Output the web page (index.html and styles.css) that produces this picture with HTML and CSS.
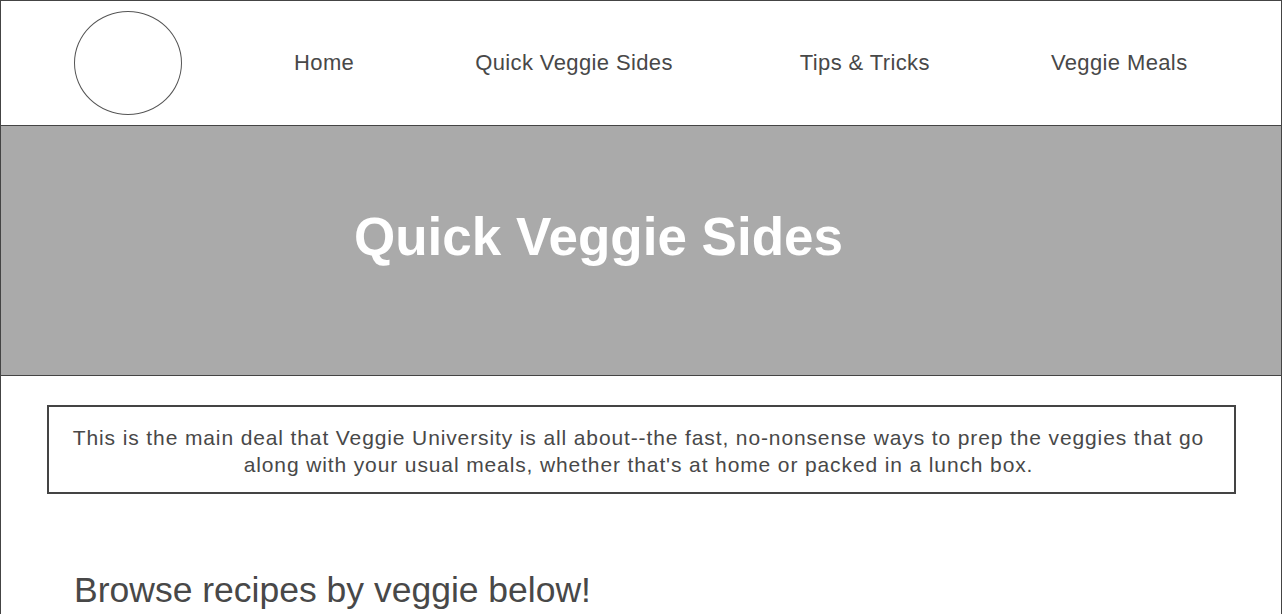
FILE: index.html
```html
<!DOCTYPE html>
<html lang="en">
<head>
<meta charset="utf-8">
<title>Quick Veggie Sides</title>
<link rel="stylesheet" href="styles.css">
</head>
<body>
<div class="page">
  <header class="site-header">
    <div class="logo"></div>
    <nav class="nav">
      <a class="nav-link nav-home" href="#">Home</a>
      <a class="nav-link nav-sides" href="#">Quick Veggie Sides</a>
      <a class="nav-link nav-tips" href="#">Tips &amp; Tricks</a>
      <a class="nav-link nav-meals" href="#">Veggie Meals</a>
    </nav>
  </header>
  <section class="hero">
    <h1 class="hero-title">Quick Veggie Sides</h1>
  </section>
  <main class="content">
    <p class="intro">This is the main deal that Veggie University is all about--the fast, no-nonsense ways to prep the veggies that go along with your usual meals, whether that's at home or packed in a lunch box.</p>
    <h2 class="browse">Browse recipes by veggie below!</h2>
  </main>
</div>
</body>
</html>
```
FILE: styles.css
```css
* { box-sizing: border-box; }
html, body { margin: 0; padding: 0; background: #fff; }
body {
  font-family: "Liberation Sans", Arial, sans-serif;
  color: #484848;
  overflow: hidden;
}
.page {
  width: 1282px;
  min-height: 700px;
  border: 1px solid #444;
}
.site-header {
  height: 125px;
  display: flex;
  align-items: center;
  padding-left: 73px;
  border-bottom: 1px solid #444;
}
.logo {
  width: 108px;
  height: 104px;
  border: 1px solid #555;
  border-radius: 50%;
  flex: none;
  margin-top: -1px;
}
.nav {
  display: flex;
  align-items: center;
  margin-left: 112px;
  margin-top: -1px;
}
.nav-link {
  font-size: 22px;
  color: #484848;
  text-decoration: none;
  letter-spacing: 0.38px;
}
.nav-sides { margin-left: 121px; }
.nav-tips { margin-left: 127px; }
.nav-meals { margin-left: 121px; }
.hero {
  height: 250px;
  background: #aaa;
  border-bottom: 1px solid #444;
  display: flex;
  align-items: center;
  padding-left: 353px;
}
.hero-title {
  margin: -28px 0 0 0;
  font-size: 53px;
  font-weight: bold;
  color: #fff;
}
.content {
  padding: 29px 45px 0 46px;
}
.intro {
  margin: 0;
  border: 2px solid #444;
  padding: 17px 18px 14px 12px;
  font-size: 21px;
  line-height: 27px;
  letter-spacing: 0.88px;
  text-align: center;
  color: #484848;
}
.browse {
  margin: 76px 0 0 27px;
  font-size: 35.5px;
  font-weight: normal;
  color: #484848;
}
```
